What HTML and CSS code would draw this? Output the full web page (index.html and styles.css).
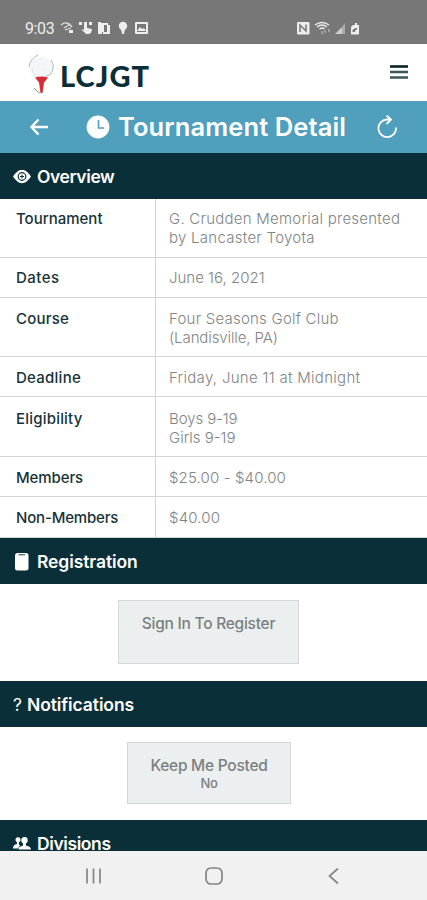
FILE: index.html
```html
<!DOCTYPE html>
<html lang="en">
<head>
<meta charset="utf-8">
<title>Tournament Detail</title>
<link rel="stylesheet" href="styles.css">
</head>
<body>
<div class="status">
  <span class="time">9:03</span>
  <svg class="st-left" width="90" height="16" viewBox="0 0 90 16" fill="#eee">
    <path d="M1 5q6-5 11 2M4 8l5-3M5 10l6-2" fill="none" stroke="#ddd" stroke-width="1.3"/><rect x="9" y="10" width="4" height="3"/>
    <path d="M19 2h3v3h-3zM24 2h3v3h-3zM29 2h3v3h-3zM24 5h3v3l5 1q0 5-4 5h-2l-5-5 3 1z"/>
    <path d="M38 2h3v1h3v9h-2v2h-4zM44 3h4v2h2v9h-7v-2h4V5h-3z"/>
    <circle cx="63" cy="6" r="4.2"/><path d="M61 9h4l-1 5h-2z"/>
    <path fill-rule="evenodd" d="M76 2h11q1 0 1 1v10q0 1-1 1H76q-1 0-1-1V3q0-1 1-1zm1 2v8h9V4zm0 7 3-4 2 2 2-1 2 3z"/>
  </svg>
  <svg class="st-right" width="66" height="16" viewBox="0 0 66 16" fill="#eee">
    <rect x="1" y="2" width="12.500" height="12.500" rx="1"/><path d="M4 12V5l6 6V4.500" fill="none" stroke="#777" stroke-width="1.500"/>
    <path d="M19 5q7-5 14 0M21 7q5-4 10 0M23.500 9q3-2 5 0" fill="none" stroke="#eee" stroke-width="1.400"/><path d="M26 11v3M29 10v3M33 9v3" stroke="#bbb" stroke-width="1.200"/>
    <path d="M39 14 46 7v7z" fill="#ccc"/><path d="M46 7l3-4v11h-3z" fill="#aaa"/>
    <path fill-rule="evenodd" d="M57 5h2V3h2v2h2v9q0 .5-1 .5h-6q-1 0-1-.5V7zm-.5 5v2h2l3-4h-2z"/>
  </svg>
</div>
<header class="brand">
  <svg class="logo" width="30" height="46" viewBox="0 0 30 46">
    <circle cx="14.500" cy="18" r="11.500" fill="#f4f7fa"/>
    <path d="M2 17Q3 9 11 5M24 10q4 6 1 12-2 4-6 4" fill="none" stroke="#b4b8b9" stroke-width="1"/>
    <path d="M5 18q1 7 7 9M8 11l1 0M13 9l1 0M18 12l1 0M11 16l1 0M17 19l1 0" fill="none" stroke="#dde2e5" stroke-width="1"/>
    <path d="M8 27.500q7-2 13 0-2 3-4 5L15.500 43h-2L12 32.500z" fill="#d62c35"/>
    <path d="M7 38l4 4 2 1" fill="none" stroke="#999" stroke-width="1"/>
  </svg>
  <span class="brand-name">LCJGT</span>
  <svg class="menu" width="20" height="16" viewBox="0 0 20 16"><path d="M1 2.500h18" stroke="#0b222b" stroke-width="2.600"/><path d="M1 8h18M1 13.500h18" stroke="#3e565c" stroke-width="2.600"/></svg>
</header>
<div class="titlebar">
  <svg class="back" width="20" height="20" viewBox="0 0 20 20" fill="none" stroke="#fff" stroke-width="2.400"><path d="M19 10H3M9.500 2.500 2.500 10l7 7.500"/></svg>
  <svg class="clock" width="24" height="24" viewBox="0 0 24 24"><circle cx="12" cy="12" r="11.400" fill="#fff"/><path d="M12.500 5v8H18" fill="none" stroke="#4f9fbd" stroke-width="1.600"/></svg>
  <h1>Tournament Detail</h1>
  <svg class="reload" width="22" height="24" viewBox="0 0 22 24" fill="none" stroke="#fff" stroke-width="1.800"><path d="M14 4.500h-3.500A8.800 8.800 0 1 0 20 12.500M10.500 0.500l4.500 4-4.500 4.500"/></svg>
</div>
<main>
  <h2 class="bar">
    <svg width="18" height="14" viewBox="0 0 18 14"><path d="M0 6.500q9-13.500 18 0-9 13.500-18 0z" fill="#fff"/><circle cx="9" cy="6.500" r="3.800" fill="none" stroke="#0b2f38" stroke-width="1.200"/><path d="M9 4.500v4M7 6.500h4" stroke="#0b2f38"/></svg>
    <span class="t-overview">Overview</span>
  </h2>
  <dl class="details">
    <dt class="k1">Tournament</dt><dd><span class="v1">G. Crudden Memorial presented</span><br><span class="v2">by Lancaster Toyota</span></dd>
    <dt class="k2">Dates</dt><dd><span class="v3">June 16, 2021</span></dd>
    <dt class="k3 low">Course</dt><dd class="low"><span class="v4">Four Seasons Golf Club</span><br><span class="v5">(Landisville, PA)</span></dd>
    <dt class="k4 low">Deadline</dt><dd class="low"><span class="v6">Friday, June 11 at Midnight</span></dd>
    <dt class="k5 lower">Eligibility</dt><dd class="lower"><span class="v7">Boys 9-19</span><br><span class="v8">Girls 9-19</span></dd>
    <dt class="k6 low">Members</dt><dd class="low"><span class="v9">$25.00 - $40.00</span></dd>
    <dt class="k7 low">Non-Members</dt><dd class="low"><span class="v10">$40.00</span></dd>
  </dl>
  <h2 class="bar">
    <svg width="18" height="20" viewBox="0 0 18 20"><rect x="2" y="1" width="13.500" height="17.500" rx="2.500" fill="#fff"/><path d="M5.500 2.700h6.500" stroke="#5b7479" stroke-width="1.400"/></svg>
    <span class="t-registration">Registration</span>
  </h2>
  <div class="panel panel-register"><button class="btn btn-register">Sign In To Register</button></div>
  <h2 class="bar bar-notify"><span class="q">?</span><span class="t-notifications">Notifications</span></h2>
  <div class="panel panel-notify"><button class="btn btn-notify">Keep Me Posted<small>No</small></button></div>
  <h2 class="bar bar-last">
    <svg width="18" height="14" viewBox="0 0 18 14" fill="#fff"><circle cx="5" cy="2.800" r="2.500"/><path d="M0 11.500q0-4 4-4.500V4.500h2v3l1 1-2 3z"/><circle cx="11.500" cy="3.200" r="3.200"/><path d="M5.500 12.500q0-3 4.500-4V6h3v2.500q5 1 5 4z"/></svg>
    <span class="t-divisions">Divisions</span>
  </h2>
</main>
<nav class="sysnav">
  <svg width="18" height="18" viewBox="0 0 18 18" stroke="#858585" stroke-width="1.700"><path d="M2 1.500v15M8.500 1.500v15M15 1.500v15"/></svg>
  <svg width="18" height="18" viewBox="0 0 18 18" fill="none" stroke="#858585" stroke-width="1.700"><rect x="1" y="1" width="16" height="16" rx="5"/></svg>
  <svg width="18" height="18" viewBox="0 0 18 18" fill="none" stroke="#858585" stroke-width="1.700"><path d="M13 1.500 4.500 9l8.500 7.500"/></svg>
</nav>
</body>
</html>
```
FILE: styles.css
```css
* { box-sizing: border-box; }
body {
  margin: 0;
  width: 427px;
  height: 900px;
  overflow: hidden;
  display: flex;
  flex-direction: column;
  background: #fff;
  font-family: Inter, "Liberation Sans", sans-serif;
}
svg { display: block; flex: none; }
h1, h2, dl, dd { margin: 0; }
.status {
  height: 44px;
  flex: none;
  background: #777;
  display: flex;
  align-items: flex-start;
  padding: 20px 65px 0 25px;
}
.time {
  font: 16px/17px Roboto, sans-serif;
  color: #eee;
  width: 35px;
  letter-spacing: -0.4px;
}
.st-right { margin-left: auto; }
.brand {
  height: 57px;
  flex: none;
  display: flex;
  align-items: center;
  padding: 0 18px 0 27px;
}
.brand-name {
  font: 900 29px/40px Lato, sans-serif;
  color: #0b2f38;
  margin: 6px 0 0 3px;
  letter-spacing: 1.1px;
}
.menu { margin: 0 0 1px auto; }
.titlebar {
  height: 52px;
  flex: none;
  background: #4f9fbd;
  display: flex;
  align-items: center;
  padding: 0 29px;
  color: #fff;
}
.clock { margin-left: 37px; }
.titlebar h1 {
  font-size: 25.5px;
  line-height: 32px;
  font-weight: 600;
  margin-left: 8px;
  letter-spacing: 0.1px;
  white-space: nowrap;
}
.reload { margin-left: auto; }
main {
  flex: none;
  height: 698px;
  overflow: hidden;
}
.bar {
  height: 46px;
  background: #0b2f38;
  color: #fff;
  display: flex;
  align-items: center;
  gap: 6px;
  padding: 1px 13px 0;
  font-size: 17.5px;
  line-height: 22px;
  font-weight: 600;
}
.t-overview { letter-spacing: -0.4px; }
.t-registration { letter-spacing: -0.1px; }
.t-notifications { letter-spacing: -0.1px; }
.t-divisions { letter-spacing: -0.4px; }
.q { font-weight: 400; width: 8px; }
.details {
  display: grid;
  grid-template-columns: 156px 1fr;
  grid-template-rows: 59px 40px 59px 40px 60px 40px 41px;
  font-size: 15px;
  line-height: 19px;
}
.details dt, .details dd {
  border-bottom: 1px solid #d3d5d5;
  padding-top: 10px;
  white-space: nowrap;
}
.details dt {
  border-right: 1px solid #d3d5d5;
  padding-left: 16px;
  font-weight: 500;
  color: #17323a;
}
.details dd {
  padding-left: 13px;
  font-weight: 300;
  color: #808485;
}
.details .low { padding-top: 11px; }
.details .lower { padding-top: 12px; }
.k2 { letter-spacing: 0.45px; }
.k3 { letter-spacing: 0.2px; }
.k4 { letter-spacing: 0.25px; }
.k5 { letter-spacing: 0.2px; }
.k6 { letter-spacing: -0.1px; }
.k7 { letter-spacing: -0.18px; }
.v1 { letter-spacing: 0.25px; }
.v2 { letter-spacing: 0.27px; }
.v4 { letter-spacing: 0.23px; }
.v5 { letter-spacing: -0.1px; }
.v6 { letter-spacing: 0.3px; }
.v7 { letter-spacing: -0.1px; }
.v9 { letter-spacing: 0.13px; }
.v10 { letter-spacing: 0.15px; }
.panel {
  display: flex;
  justify-content: center;
  align-items: flex-start;
  padding-top: 16px;
}
.panel-register { height: 97px; padding-right: 10px; }
.panel-notify { height: 93px; padding: 15px 9px 0 0; }
.btn {
  font: 500 15.5px/19px Inter, sans-serif;
  letter-spacing: -0.25px;
  display: flex;
  flex-direction: column;
  align-items: center;
  justify-content: flex-start;
  border: 1px solid #d1d7d7;
  background: #ebeff0;
  color: #7b7f80;
  padding: 13px 0 0;
  white-space: nowrap;
}
.btn-register { width: 181px; height: 64px; }
.btn-notify { width: 164px; height: 62px; }
.btn small { font-size: 13px; line-height: 16px; }
.sysnav {
  height: 49px;
  flex: none;
  background: #f1f1f1;
  display: flex;
  justify-content: space-between;
  align-items: center;
  padding: 0 84px 0 85px;
}
```
